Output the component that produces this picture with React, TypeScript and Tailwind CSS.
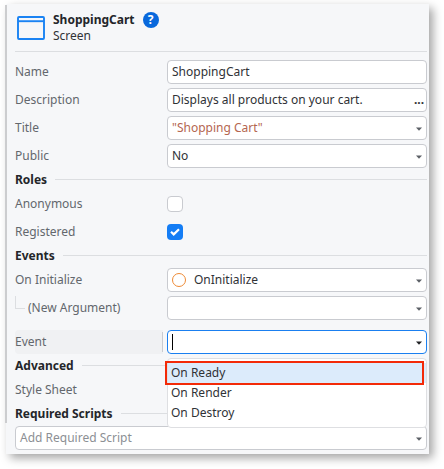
import type { ReactNode } from 'react';

function Caret({ dark = false }: { dark?: boolean }) {
  return (
    <svg width="6" height="4" viewBox="0 0 6 4" className={dark ? 'mt-px shrink-0 text-[#202124]' : 'mt-px shrink-0 text-[#5c6066]'}>
      <path d="M0 0.5h6L3 3.7z" fill="currentColor" />
    </svg>
  );
}

function Field({ children, caret = true, active = false }: { children?: ReactNode; caret?: boolean; active?: boolean }) {
  return (
    <div
      className={`flex h-6 w-[260px] shrink-0 items-center justify-between rounded border bg-white pl-1 pr-1 ${
        active ? 'border-[#1a7ff0]' : 'border-[#c9cbd0]'
      }`}
    >
      <div className="flex items-center">{children}</div>
      {caret && <Caret dark={active} />}
    </div>
  );
}

function Row({ label, children }: { label: ReactNode; children?: ReactNode }) {
  return (
    <div className="flex h-7 items-center">
      <div className="w-[152px] shrink-0 text-[#63676d]">{label}</div>
      {children}
    </div>
  );
}

function Section({ title }: { title: string }) {
  return (
    <div className="flex h-5 items-center gap-2">
      <h2 className="pt-0.5 font-bold text-[#24262a]">{title}</h2>
      <div className="h-px flex-1 bg-[#dcdee1]" />
    </div>
  );
}

export default function App() {
  return (
    <div className="h-[469px] w-[444px] overflow-hidden bg-white pl-[6px] pt-1 font-['Noto_Sans',sans-serif] text-[12px] leading-4 text-[#303236]">
      <div className="relative h-[450px] w-[423px] bg-[#f6f7f9] pl-[9px] pr-0.5 shadow-[4px_4px_9px_rgba(0,0,0,0.36)]">
        <div className="absolute -left-px top-px h-[418px] w-0.5 bg-[#cccdcf]" />

        <header className="flex h-12 border-b border-[#dcdee1] pl-0.5 pt-2">
          <svg width="28" height="24" viewBox="0 0 28 24" className="mt-1 shrink-0" fill="none" stroke="#1a83f3" strokeWidth="1.9">
            <rect x="1" y="1" width="26" height="22" rx="1" />
            <path d="M1 5.2h26" />
          </svg>
          <div className="ml-2">
            <div className="flex h-4 items-center gap-2">
              <h1 className="font-bold text-[#24262a]">ShoppingCart</h1>
              <span className="flex size-4 items-center justify-center rounded-full bg-[#0868dc] text-[12px] font-bold text-white">?</span>
            </div>
            <p>Screen</p>
          </div>
        </header>

        <div className="pt-1.5">
          <Row label="Name"><Field caret={false}>ShoppingCart</Field></Row>
          <Row label="Description">
            <Field caret={false}><span className="w-[242px]">Displays all products on your cart.</span><span className="-mr-1 font-bold">...</span></Field>
          </Row>
          <Row label="Title"><Field><span className="text-[#b46650]">"Shopping Cart"</span></Field></Row>
          <Row label="Public"><Field>No</Field></Row>
        </div>

        <div className="-mt-px"><Section title="Roles" /></div>
        <div className="pt-px">
          <Row label="Anonymous"><span className="size-4 rounded border border-[#c9cbd0] bg-white" /></Row>
          <Row label="Registered">
            <span className="flex size-4 items-center justify-center rounded bg-[#147df5]">
              <svg width="10" height="8" viewBox="0 0 10 8" fill="none" stroke="white" strokeWidth="2.2"><path d="M1 3.8l2.7 2.6L9 1.2" /></svg>
            </span>
          </Row>
        </div>
        <div className="-mt-px"><Section title="Events" /></div>
        <div className="pt-px">
          <Row label="On Initialize">
            <Field>
              <span className="size-3.5 rounded-full border border-[#ee8a35]" />
              <span className="ml-2">OnInitialize</span>
            </Field>
          </Row>
          <Row label={<div className="flex items-center"><span className="mr-[3px] mb-3 h-[13px] w-2.5 border-b border-l border-[#dcdee1]" />(New Argument)</div>}>
            <Field />
          </Row>
        </div>
        <div className="flex h-[34px] items-center pt-1.5">
          <div className="mr-1 flex h-6 w-[148px] items-center rounded-l-sm bg-[#f0f1f3] text-[#63676d]">
            <span className="flex-1">Event</span>
            <span className="h-5 w-px bg-[#c9cbd0]" />
          </div>
          <Field active><span className="h-4 w-px bg-black" /></Field>
        </div>
        <div className="-mt-px"><Section title="Advanced" /></div>
        <div className="pt-px"><Row label="Style Sheet" /></div>
        <div className="-mt-px"><Section title="Required Scripts" /></div>
        <div className="mt-[3px] flex h-6 w-[412px] items-center justify-between rounded border border-[#c9cbd0] bg-white px-1 text-[#8c8f94]">
          Add Required Script<Caret />
        </div>

        <div className="absolute left-[161px] top-[354px] h-[70px] w-[260px] rounded-sm border border-[#dedfe2] bg-white pt-1">
          <ul>
            <li className="flex h-5 items-center bg-[#dcebfb] pl-[3px]">On Ready</li>
            <li className="flex h-5 items-center pl-[3px]">On Render</li>
            <li className="flex h-5 items-center pl-[3px]">On Destroy</li>
          </ul>
          <div className="absolute -left-[3px] top-0.5 h-6 w-[259px] border-2 border-[#f32a08]" />
        </div>
      </div>
    </div>
  );
}
